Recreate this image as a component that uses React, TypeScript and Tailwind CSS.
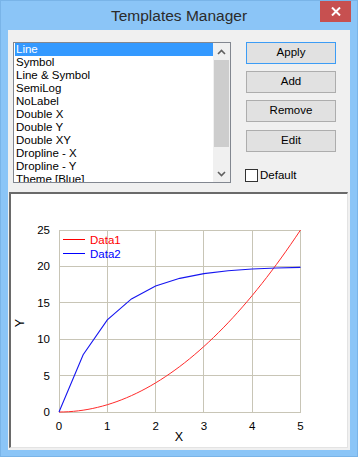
import React from "react";

const items = [
  "Line",
  "Symbol",
  "Line & Symbol",
  "SemiLog",
  "NoLabel",
  "Double X",
  "Double Y",
  "Double XY",
  "Dropline - X",
  "Dropline - Y",
  "Theme [Blue]",
];

const X0 = 59;
const X1 = 300.5;
const Y0 = 412;
const Y1 = 230;
const sx = (X1 - X0) / 5;
const sy = (Y0 - Y1) / 25;
const px = (v: number) => X0 + v * sx;
const py = (v: number) => Y0 - v * sy;

function Chart() {
  const red: string[] = [];
  for (let i = 0; i <= 50; i++) {
    const x = i / 10;
    red.push(`${px(x).toFixed(2)},${py(x * x).toFixed(2)}`);
  }
  const blue: string[] = [];
  for (let i = 0; i <= 10; i++) {
    const x = i / 2;
    blue.push(`${px(x).toFixed(2)},${py(20 * (1 - Math.exp(-x))).toFixed(2)}`);
  }
  const grid = "#c8c5b6";
  return (
    <svg width={336} height={253} viewBox="11 194 336 253" className="block" style={{ fontFamily: "'Liberation Sans', Arial, sans-serif" }}>
      {[0, 1, 2, 3, 4, 5].map((i) => (
        <line key={"v" + i} x1={px(i)} x2={px(i)} y1={Y1} y2={Y0} stroke={grid} strokeWidth={1} shapeRendering="crispEdges" />
      ))}
      {[0, 5, 10, 15, 20, 25].map((v) => (
        <line key={"h" + v} x1={X0} x2={X1} y1={py(v)} y2={py(v)} stroke={grid} strokeWidth={1} shapeRendering="crispEdges" />
      ))}
      {[0, 5, 10, 15, 20, 25].map((v) => (
        <text key={"yl" + v} x={50} y={py(v) + 4} fontSize={11.5} textAnchor="end" fill="#000">
          {v}
        </text>
      ))}
      {[0, 1, 2, 3, 4, 5].map((i) => (
        <text key={"xl" + i} x={px(i)} y={430} fontSize={11.5} textAnchor="middle" fill="#000">
          {i}
        </text>
      ))}
      <text x={179} y={441} fontSize={12.5} textAnchor="middle" fill="#000">
        X
      </text>
      <text x={24} y={323} fontSize={12.5} textAnchor="middle" fill="#000" transform="rotate(-90 24 323)">
        Y
      </text>
      <polyline points={red.join(" ")} fill="none" stroke="#ff2a2a" strokeWidth={1} />
      <polyline points={blue.join(" ")} fill="none" stroke="#1515f0" strokeWidth={1.1} />
      <line x1={63} x2={85} y1={239.5} y2={239.5} stroke="#ff0000" strokeWidth={1} />
      <text x={90} y={243.5} fontSize={11.5} fill="#ff0000">
        Data1
      </text>
      <line x1={63} x2={85} y1={253.5} y2={253.5} stroke="#0000ff" strokeWidth={1} />
      <text x={90} y={258} fontSize={11.5} fill="#0000ff">
        Data2
      </text>
    </svg>
  );
}

function Btn({ label, focused }: { label: string; focused?: boolean }) {
  return (
    <div
      className={
        "w-[90px] h-[22px] flex items-center justify-center bg-[#e1e1e1] text-[11.5px] text-black border " +
        (focused ? "border-[#3c9cf5]" : "border-[#adadad]")
      }
    >
      {label}
    </div>
  );
}

export default function App() {
  return (
    <div
      className="w-[358px] h-[457px] bg-[#8bc5f7] border border-[#79b4e8] flex flex-col relative"
      style={{ fontFamily: "'Liberation Sans', Arial, sans-serif" }}
    >
      <div className="h-[29px] flex items-center justify-center text-[15.5px] text-[#2b2b2b] pt-[1px]">
        Templates Manager
      </div>
      <div className="absolute top-0 right-[6px] w-[31px] h-[21px] bg-[#c75050] flex items-center justify-center">
        <svg width="10" height="9" viewBox="0 0 10 9">
          <path d="M1 0.5 L9 8.5 M9 0.5 L1 8.5" stroke="#fff" strokeWidth="2" />
        </svg>
      </div>
      <div className="mx-[7px] h-[420px] bg-[#f0f0f0] flex flex-col">
        <div className="flex items-start pt-[12px] pl-[5px]">
          {/* listbox */}
          <div className="w-[218px] h-[141px] border border-[#828790] bg-white flex">
            <div className="w-[199px] h-[139px] overflow-hidden text-[11.5px] leading-[13px] pl-[1px]">
              {items.map((it, i) => (
                <div
                  key={it}
                  className={
                    "h-[13px] pl-[1px] whitespace-nowrap " + (i === 0 ? "bg-[#3399ff] text-white" : "text-black")
                  }
                >
                  {it}
                </div>
              ))}
            </div>
            <div className="w-[17px] h-[139px] bg-[#f0f0f0] flex flex-col items-center">
              <div className="h-[17px] w-full flex items-center justify-center">
                <svg width="9" height="6" viewBox="0 0 9 6">
                  <path d="M1 5 L4.5 1.5 L8 5" stroke="#606060" strokeWidth="1.6" fill="none" />
                </svg>
              </div>
              <div className="w-[15px] h-[87px] bg-[#cdcdcd]" />
              <div className="flex-1" />
              <div className="h-[17px] w-full flex items-center justify-center">
                <svg width="9" height="6" viewBox="0 0 9 6">
                  <path d="M1 1 L4.5 4.5 L8 1" stroke="#606060" strokeWidth="1.6" fill="none" />
                </svg>
              </div>
            </div>
          </div>
          <div className="ml-[15px] flex flex-col">
            <Btn label="Apply" focused />
            <div className="h-[7px]" />
            <Btn label="Add" />
            <div className="h-[7px]" />
            <Btn label="Remove" />
            <div className="h-[8px]" />
            <Btn label="Edit" />
            <div className="flex items-center h-[13px] mt-[17px] -ml-[1px]">
              <div className="w-[13px] h-[13px] border border-[#333333] bg-white" />
              <span className="ml-[2px] text-[11.5px] leading-[13px] text-black">Default</span>
            </div>
          </div>
        </div>
        <div className="mt-[9px] ml-[1px] w-[339px] h-[256px] bg-white border-l-2 border-t-2 border-r border-b border-l-[#6a6a6a] border-t-[#6a6a6a] border-r-[#e3e3e3] border-b-[#e3e3e3]">
          <Chart />
        </div>
      </div>
    </div>
  );
}
